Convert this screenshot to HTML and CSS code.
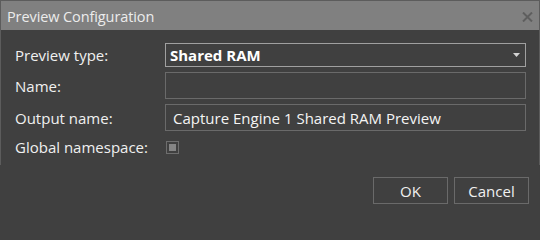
FILE: index.html
```html
<!DOCTYPE html>
<html>
<head>
<meta charset="utf-8">
<title>Preview Configuration</title>
<link rel="stylesheet" href="styles.css">
</head>
<body>
<div class="dialog">
  <div class="upper">
    <div class="titlebar">
      <span class="title">Preview Configuration</span>
      <svg class="close" width="11" height="10" viewBox="0 0 11 10"><path d="M1 0.5 L10 9.5 M10 0.5 L1 9.5" stroke="#5e5e5e" stroke-width="2"/></svg>
    </div>
    <div class="form">
      <div class="row">
        <label class="label">Preview type:</label>
        <div class="field select">
          <span class="value">Shared RAM</span>
          <svg class="arrow" width="7" height="4" viewBox="0 0 7 4"><path d="M0 0 H7 L3.5 4 Z" fill="#d4d4d4"/></svg>
        </div>
      </div>
      <div class="row">
        <label class="label">Name:</label>
        <div class="field input"></div>
      </div>
      <div class="row">
        <label class="label">Output name:</label>
        <div class="field input"><span class="text">Capture Engine 1 Shared RAM Preview</span></div>
      </div>
      <div class="row check-row">
        <label class="label">Global namespace:</label>
        <div class="checkbox"><div class="mark"></div></div>
      </div>
    </div>
  </div>
  <div class="footer">
    <button class="btn">OK</button>
    <button class="btn">Cancel</button>
  </div>
</div>
</body>
</html>
```

FILE: styles.css
```css
html, body {
  margin: 0;
  padding: 0;
  background: #404040;
}
body {
  font-family: "Open Sans", "Noto Sans", sans-serif;
  color: #f0f0f0;
}
.dialog {
  width: 540px;
  height: 211px;
  background: #404040;
  display: flex;
  flex-direction: column;
}
.upper {
  border: 1px solid #5c5c5c;
  border-bottom: none;
  box-sizing: border-box;
  height: 165px;
}
.titlebar {
  height: 29px;
  background: #808080;
  display: flex;
  align-items: center;
  justify-content: space-between;
  padding: 0 6px 0 6px;
}
.title {
  font-size: 14.5px;
  color: #ececec;
  letter-spacing: -0.1px;
  position: relative;
  top: 1px;
}
.close {
  display: block;
  margin-top: 3px;
}
.form {
  padding: 13px 13px 0 14px;
  display: flex;
  flex-direction: column;
  gap: 5px;
}
.row {
  display: flex;
  align-items: center;
}
.label {
  width: 150px;
  flex: none;
  font-size: 15px;
  color: #f0f0f0;
}
.field {
  flex: 1;
  box-sizing: border-box;
  height: 27px;
  border: 1px solid #6a6a6a;
  display: flex;
  align-items: center;
}
.select {
  height: 24px;
  border-color: #a0a0a0;
  justify-content: space-between;
  padding: 0 5px 0 4px;
}
.value {
  font-weight: bold;
  font-size: 15px;
  color: #ffffff;
}
.arrow {
  display: block;
}
.text {
  font-size: 15px;
  color: #f4f4f4;
  padding-left: 7px;
}
.check-row {
  height: 22px;
}
.checkbox {
  width: 13px;
  height: 13px;
  box-sizing: border-box;
  border: 1px solid #6e6e6e;
  display: flex;
  align-items: center;
  justify-content: center;
  margin-left: 1px;
}
.mark {
  width: 7px;
  height: 7px;
  background: #858585;
}
.footer {
  display: flex;
  justify-content: flex-end;
  gap: 6px;
  padding: 12px 11px 0 0;
}
.btn {
  width: 75px;
  height: 27px;
  box-sizing: border-box;
  background: #404040;
  border: 1px solid #6a6a6a;
  color: #f0f0f0;
  font-family: "Open Sans", "Noto Sans", sans-serif;
  font-size: 15px;
  padding: 0;
  margin: 0;
}
```
